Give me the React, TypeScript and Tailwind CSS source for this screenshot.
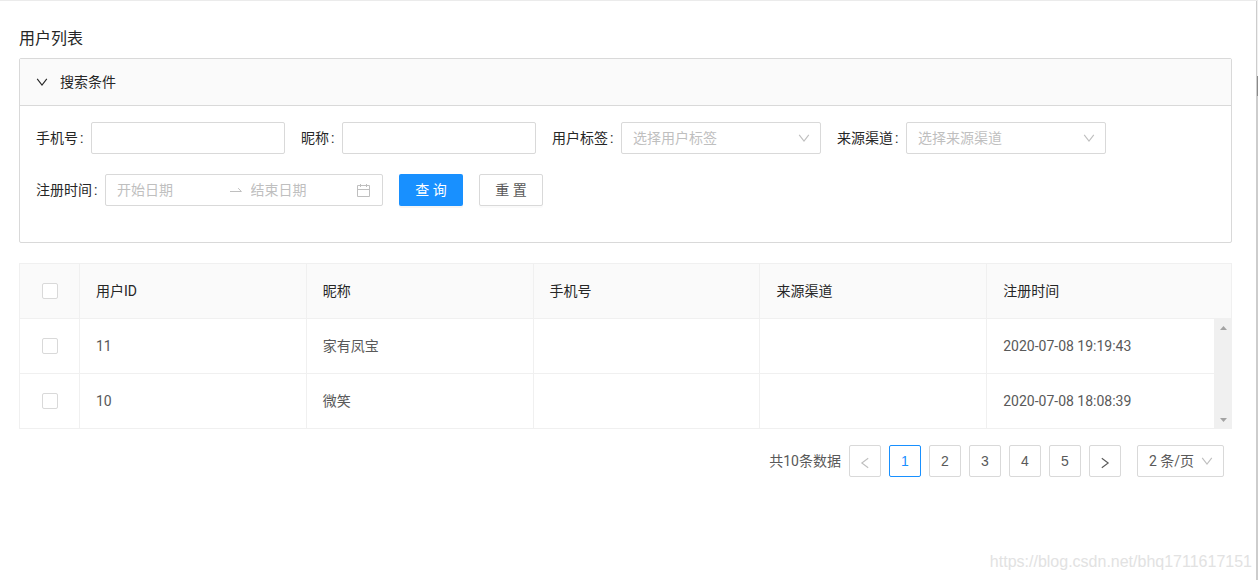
import React from 'react';

const fontText = "font-['Roboto','Noto_Sans_CJK_SC',sans-serif]";
const fieldBox = 'h-8 rounded-xs border border-[#d9d9d9] bg-white';

interface ChevronProps {
  className?: string;
}

const ChevronDown: React.FC<ChevronProps> = ({ className = '' }) => (
  <svg
    viewBox="0 0 12 12"
    className={`pointer-events-none h-3 w-3 shrink-0 ${className}`}
    fill="none"
    stroke="currentColor"
    strokeWidth="1.1"
    aria-hidden="true"
  >
    <path d="M1.2 2.8 6 9.2l4.8-6.4" />
  </svg>
);

interface FieldProps {
  id: string;
  label: string;
  children: React.ReactNode;
}

const Field: React.FC<FieldProps> = ({ id, label, children }) => (
  <div className="flex items-center">
    <label htmlFor={id} className="flex pr-2 text-[#262626]">
      {label}
      <span className="ml-0.5 w-[3px]">:</span>
    </label>
    {children}
  </div>
);

interface SelectFieldProps {
  id: string;
  label: string;
  placeholder: string;
}

const SelectField: React.FC<SelectFieldProps> = ({ id, label, placeholder }) => (
  <Field id={id} label={label}>
    <div className="relative">
      <select
        id={id}
        className={`${fieldBox} w-[200px] appearance-none px-[11px] text-[#bfbfbf]`}
      >
        <option>{placeholder}</option>
      </select>
      <ChevronDown className="absolute top-2.5 right-[11px] text-[#bfbfbf]" />
    </div>
  </Field>
);

const Checkbox: React.FC<{ label: string }> = ({ label }) => (
  <input
    type="checkbox"
    aria-label={label}
    className="mx-auto block h-4 w-4 appearance-none rounded-xs border border-[#d9d9d9] bg-white checked:bg-[#1890ff]"
  />
);

const SearchPanel: React.FC = () => (
  <section className="rounded-xs border border-[#d9d9d9]">
    {/* Collapse header */}
    <button
      type="button"
      aria-expanded="true"
      className="flex h-[47px] w-full items-center gap-3 border-b border-[#d9d9d9] bg-[#fafafa] px-4 text-[#262626]"
    >
      <ChevronDown />
      搜索条件
    </button>

    <form className="flex flex-wrap gap-x-4 gap-y-5 p-4 pb-9" onSubmit={(e) => e.preventDefault()}>
      <Field id="phone" label="手机号">
        <input id="phone" type="text" className={`${fieldBox} w-[194px] px-[11px]`} />
      </Field>
      <Field id="nickname" label="昵称">
        <input id="nickname" type="text" className={`${fieldBox} w-[194px] px-[11px]`} />
      </Field>
      <SelectField id="tag" label="用户标签" placeholder="选择用户标签" />
      <SelectField id="channel" label="来源渠道" placeholder="选择来源渠道" />

      {/* Second row */}
      <div className="flex w-full gap-4">
        <Field id="start" label="注册时间">
          <div className={`${fieldBox} flex w-[278px] items-center pr-3 pl-[11px] text-[#bfbfbf]`}>
            <input
              id="start"
              type="text"
              placeholder="开始日期"
              className="w-0 flex-1 placeholder:text-[#bfbfbf]"
            />
            <svg
              viewBox="0 0 14 14"
              className="mr-2 ml-1.5 h-3.5 w-3.5 shrink-0"
              fill="none"
              stroke="currentColor"
              aria-hidden="true"
            >
              <path d="M1 8.5h11.4L9.200 5.200" />
            </svg>
            <input
              type="text"
              placeholder="结束日期"
              aria-label="结束日期"
              className="w-0 flex-1 placeholder:text-[#bfbfbf]"
            />
            <svg
              viewBox="0 0 14 14"
              className="h-3.5 w-3.5 shrink-0"
              fill="none"
              stroke="currentColor"
              aria-hidden="true"
            >
              <path d="M1.5 2.5h12v11h-12zM1.5 6.5h12M4.5 1v3M10.5 1v3" />
            </svg>
          </div>
        </Field>
        <button type="submit" className="h-8 w-16 rounded-xs bg-[#1890ff] text-white shadow-[0_2px_0_rgba(0,0,0,0.04)]">
          查 询
        </button>
        <button type="reset" className={`${fieldBox} w-16 text-[#595959] shadow-[0_2px_0_rgba(0,0,0,0.02)]`}>
          重 置
        </button>
      </div>
    </form>
  </section>
);

const columns = ['用户ID', '昵称', '手机号', '来源渠道', '注册时间'];

const users = [
  { id: '11', name: '家有凤宝', phone: '', channel: '', time: '2020-07-08 19:19:43' },
  { id: '10', name: '微笑', phone: '', channel: '', time: '2020-07-08 18:08:39' },
];

const UserTable: React.FC = () => (
  <table className="mt-5 w-full table-fixed border-separate border-spacing-0 border-t border-l border-[#f0f0f0] text-left">
    <colgroup>
      <col className="w-[60px]" />
      <col />
      <col />
      <col />
      <col />
      <col />
      <col className="w-[18px]" />
    </colgroup>
    <thead>
      <tr className="h-[55px] bg-[#fafafa] text-[#262626]">
        <th className="border-r border-b border-[#f0f0f0] font-normal">
          <Checkbox label="全选" />
        </th>
        {columns.map((column, i) => (
          <th
            key={column}
            colSpan={i === columns.length - 1 ? 2 : 1}
            className="border-r border-b border-[#f0f0f0] px-4 font-normal"
          >
            {column}
          </th>
        ))}
      </tr>
    </thead>
    <tbody>
      {users.map((user, row) => (
        <tr key={user.id} className="h-[55px] text-[#595959]">
          <td className="border-r border-b border-[#f0f0f0]">
            <Checkbox label={user.name} />
          </td>
          <td className="border-r border-b border-[#f0f0f0] px-4">{user.id}</td>
          <td className="border-r border-b border-[#f0f0f0] px-4">{user.name}</td>
          <td className="border-r border-b border-[#f0f0f0] px-4">{user.phone}</td>
          <td className="border-r border-b border-[#f0f0f0] px-4">{user.channel}</td>
          <td className="border-b border-[#f0f0f0] px-4">{user.time}</td>
          {/* Scrollbar track next to the rows */}
          {row === 0 && (
            <td rowSpan={users.length} className="bg-[#f0f0f0] p-0">
              <div className="flex h-[110px] flex-col items-center justify-between py-[7px] text-[#a3a3a3]">
                <svg viewBox="0 0 7 4" className="h-1 w-[7px]" fill="currentColor" aria-hidden="true">
                  <path d="M0 4 3.5 0 7 4z" />
                </svg>
                <svg viewBox="0 0 7 4" className="h-1 w-[7px]" fill="currentColor" aria-hidden="true">
                  <path d="M0 0h7L3.5 4z" />
                </svg>
              </div>
            </td>
          )}
        </tr>
      ))}
    </tbody>
  </table>
);

const pages = [1, 2, 3, 4, 5];

const Pagination: React.FC = () => (
  <nav aria-label="分页" className="mt-4 flex items-center justify-end gap-2 pr-2 text-[#595959]">
    <span>共10条数据</span>
    <button
      type="button"
      aria-label="上一页"
      disabled
      className={`${fieldBox} flex w-8 items-center justify-center text-[#bfbfbf]`}
    >
      <svg viewBox="0 0 12 12" className="mt-1 h-3 w-3" fill="none" stroke="currentColor" strokeWidth="1.1" aria-hidden="true">
        <path d="M9.2 1.2 2.8 6l6.4 4.8" />
      </svg>
    </button>
    {pages.map((page) => (
      <button
        key={page}
        type="button"
        aria-current={page === 1 ? 'page' : undefined}
        className={`h-8 w-8 rounded-xs border bg-white font-['Liberation_Sans',sans-serif] ${
          page === 1 ? 'border-[#1890ff] text-[#1890ff]' : 'border-[#d9d9d9]'
        }`}
      >
        {page}
      </button>
    ))}
    <button type="button" aria-label="下一页" className={`${fieldBox} flex w-8 items-center justify-center`}>
      <svg viewBox="0 0 12 12" className="mt-1 h-3 w-3" fill="none" stroke="currentColor" strokeWidth="1.1" aria-hidden="true">
        <path d="M2.8 1.2 9.2 6l-6.4 4.8" />
      </svg>
    </button>
    <div className="relative ml-2">
      <select aria-label="每页条数" className={`${fieldBox} w-[87px] appearance-none px-[11px]`}>
        <option>2 条/页</option>
      </select>
      <ChevronDown className="absolute top-2.5 right-[11px] text-[#bfbfbf]" />
    </div>
  </nav>
);

export default function App() {
  return (
    <div className={`flex min-h-screen border-t border-[#ebebeb] bg-white text-sm ${fontText}`}>
      <main className="flex min-w-0 flex-1 flex-col pt-[26px] pr-6 pl-[19px]">
        <h1 className="mb-[7px] text-base text-[#262626]">用户列表</h1>
        <SearchPanel />
        <UserTable />
        <Pagination />
        <p className="mt-auto -mr-5 self-end pb-1.5 font-['Liberation_Sans',sans-serif] text-base text-[#e2e2e2]">
          https://blog.csdn.net/bhq1711617151
        </p>
      </main>
      {/* Window scroll rail */}
      <div className="flex w-0.5 flex-col border-l border-[#cdcdcd]">
        <div className="h-[75px] bg-[#f0f0f0]" />
        <div className="h-5 bg-[#8a8a8a]" />
        <div className="flex-1 bg-[#cdcdcd]" />
      </div>
    </div>
  );
}
